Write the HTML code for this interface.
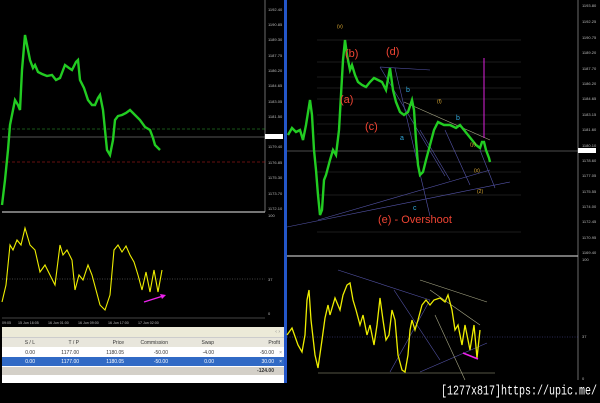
<!DOCTYPE html>
<html><head><meta charset="utf-8"><style>
html,body{margin:0;padding:0;background:#000;width:600px;height:403px;overflow:hidden;font-family:"Liberation Sans",sans-serif}
svg{position:absolute;left:0;top:0}
.ax{font-size:4px;fill:#bbb;font-family:"Liberation Sans",sans-serif}
.tb{position:absolute;left:2px;top:327px;width:282px;height:56px;background:#fff;font-size:5px;color:#333}
.tb div{position:absolute;left:0;width:282px}
.c{position:absolute;text-align:right}
.wm{position:absolute;left:441px;top:385px;font-family:"Liberation Mono",monospace;font-size:10px;line-height:12px;color:#fff;white-space:nowrap;transform:scaleY(1.35);transform-origin:0 0}
</style></head><body>
<svg width="600" height="403" viewBox="0 0 600 403">
<line x1="265" y1="0" x2="265" y2="212" stroke="#999" stroke-width="0.7"/>
<line x1="2" y1="129" x2="265" y2="129" stroke="#3a3" stroke-width="0.6" stroke-dasharray="3,2"/>
<line x1="2" y1="137" x2="265" y2="137" stroke="#aaa" stroke-width="0.6"/>
<line x1="2" y1="162" x2="265" y2="162" stroke="#c22" stroke-width="0.6" stroke-dasharray="3,2"/>
<polyline fill="none" stroke="#2c2" stroke-width="2.4" points="2,205 5,180 8,150 10,125 13,110 15,100 18,105 20,110 22,70 25,35 28,50 30,60 33,68 35,65 38,72 42,74 47,76 52,75 56,80 60,78 65,65 69,68 72,70 76,62 78,60 80,80 84,88 88,100 92,105 95,105 98,98 100,95 103,110 105,130 107,150 110,155 113,140 115,120 118,116 122,115 126,113 130,110 135,115 140,120 145,127 150,130 153,138 155,145 158,148 160,150"/>
<rect x="265" y="134" width="18" height="5" fill="#fff"/>
<g class="ax"><text x="268" y="11">1192.40</text><text x="268" y="26">1190.85</text><text x="268" y="41">1189.30</text><text x="268" y="57">1187.75</text><text x="268" y="72">1186.20</text><text x="268" y="87">1184.65</text><text x="268" y="103">1183.05</text><text x="268" y="118">1181.50</text><text x="268" y="148">1179.40</text><text x="268" y="164">1176.85</text><text x="268" y="179">1175.30</text><text x="268" y="195">1173.70</text><text x="268" y="210">1172.10</text><text x="268" y="217">100</text><text x="268" y="281">37</text><text x="268" y="315">0</text></g>
<line x1="2" y1="212" x2="265" y2="212" stroke="#bbb" stroke-width="1.3"/>
<line x1="2" y1="279" x2="265" y2="279" stroke="#888" stroke-width="0.5" stroke-dasharray="1,1.5"/>
<line x1="2" y1="318" x2="265" y2="318" stroke="#888" stroke-width="0.5"/>
<polyline fill="none" stroke="#ee0" stroke-width="1.1" points="2,302 6,285 10,245 13,250 17,240 21,245 25,228 30,245 35,250 40,272 45,265 50,275 55,285 60,245 63,255 67,250 72,260 75,290 79,275 83,280 88,265 92,275 96,290 100,305 105,310 110,295 114,250 118,245 122,252 126,246 130,255 134,262 138,275 142,290 146,272 150,292 154,270 158,292 162,270"/>
<line x1="144" y1="302" x2="163" y2="296" stroke="#e2e" stroke-width="1.3"/>
<polygon points="166,295 160,294 162,299" fill="#e2e"/>
<g class="ax" style="font-size:3.6px"><text x="2" y="324">09:05</text><text x="18" y="324">15 Jun 16:05</text><text x="48" y="324">16 Jun 01:00</text><text x="78" y="324">16 Jun 09:00</text><text x="108" y="324">16 Jun 17:00</text><text x="138" y="324">17 Jun 02:00</text></g>
<rect x="284" y="0" width="3" height="383" fill="#2456c8"/>
<line x1="578" y1="0" x2="578" y2="380" stroke="#999" stroke-width="0.7"/>
<g stroke="#3a3a3a" stroke-width="0.6">
<line x1="317" y1="40" x2="521" y2="40"/><line x1="317" y1="62" x2="521" y2="62"/><line x1="317" y1="77" x2="521" y2="77"/><line x1="317" y1="88" x2="521" y2="88"/><line x1="317" y1="99" x2="521" y2="99"/><line x1="317" y1="115" x2="521" y2="115"/><line x1="317" y1="124" x2="521" y2="124"/><line x1="317" y1="134" x2="521" y2="134"/><line x1="317" y1="162" x2="521" y2="162"/><line x1="317" y1="172" x2="521" y2="172"/><line x1="317" y1="195" x2="521" y2="195"/><line x1="317" y1="232" x2="521" y2="232"/></g>
<line x1="287" y1="151" x2="578" y2="151" stroke="#999" stroke-width="0.6"/>
<g stroke="#55a" stroke-width="0.6" fill="none">
<line x1="287" y1="227" x2="510" y2="182"/><line x1="318" y1="220" x2="490" y2="170"/>
<line x1="395" y1="68" x2="430" y2="216"/><line x1="380" y1="67" x2="445" y2="176"/>
<line x1="380" y1="67" x2="430" y2="70"/><line x1="420" y1="130" x2="450" y2="180"/><line x1="445" y1="130" x2="470" y2="185"/><line x1="480" y1="150" x2="495" y2="188"/></g>
<line x1="404" y1="102" x2="490" y2="140" stroke="#aa8" stroke-width="0.6"/>
<line x1="484" y1="58" x2="484" y2="138" stroke="#d2d" stroke-width="1"/>
<polyline fill="none" stroke="#2c2" stroke-width="2.4" points="288,135 292,128 296,132 300,130 303,140 306,125 310,100 312,115 314,150 316,170 318,195 320,215 322,210 324,180 326,175 330,160 333,150 336,155 339,130 341,95 343,60 345,40 347,55 350,70 352,65 355,75 358,82 362,85 366,87 370,82 374,78 378,80 382,82 386,90 390,68 393,90 396,102 400,112 404,115 408,112 412,100 414,110 416,140 418,165 420,175 423,172 426,160 430,145 434,130 438,122 444,125 450,125 456,128 460,125 464,130 468,135 472,140 476,145 480,148 482,142 484,142 486,150 489,158 490,162"/>
<rect x="578" y="148" width="18" height="5" fill="#fff"/>
<g class="ax"><text x="582" y="7">1193.80</text><text x="582" y="23">1192.25</text><text x="582" y="39">1190.75</text><text x="582" y="54">1189.20</text><text x="582" y="70">1187.70</text><text x="582" y="85">1186.20</text><text x="582" y="100">1184.65</text><text x="582" y="116">1183.15</text><text x="582" y="131">1181.60</text><text x="582" y="147">1180.10</text><text x="582" y="162">1178.60</text><text x="582" y="177">1177.05</text><text x="582" y="193">1175.55</text><text x="582" y="208">1174.00</text><text x="582" y="223">1172.45</text><text x="582" y="239">1170.95</text><text x="582" y="254">1169.40</text><text x="582" y="261">100</text><text x="582" y="338">37</text><text x="582" y="380">0</text></g>
<g font-family="Liberation Sans,sans-serif" fill="#e43" font-size="11"><text x="345" y="57">(b)</text><text x="386" y="55">(d)</text><text x="340" y="103">(a)</text><text x="365" y="130">(c)</text><text x="378" y="223">(e) - Overshoot</text></g>
<g font-family="Liberation Sans,sans-serif" fill="#3ad" font-size="7"><text x="406" y="92">b</text><text x="400" y="140">a</text><text x="413" y="210">c</text><text x="456" y="120">b</text></g>
<g font-family="Liberation Sans,sans-serif" fill="#da3" font-size="5"><text x="437" y="103">(f)</text><text x="474" y="172">(x)</text><text x="477" y="193">(2)</text><text x="470" y="146">(y)</text><text x="337" y="28">(v)</text></g>
<line x1="287" y1="256" x2="578" y2="256" stroke="#bbb" stroke-width="1.3"/>
<line x1="287" y1="337" x2="578" y2="337" stroke="#55a" stroke-width="0.5" stroke-dasharray="1,1.5"/>
<g stroke-width="0.6" fill="none"><line x1="338" y1="270" x2="430" y2="300" stroke="#55a"/><line x1="394" y1="290" x2="440" y2="360" stroke="#55a"/><line x1="390" y1="372" x2="430" y2="300" stroke="#55a"/><line x1="420" y1="372" x2="487" y2="343" stroke="#55a"/><line x1="420" y1="280" x2="487" y2="302" stroke="#aa8"/><line x1="430" y1="290" x2="480" y2="325" stroke="#aa8"/><line x1="435" y1="315" x2="465" y2="380" stroke="#aa8"/><line x1="318" y1="373" x2="495" y2="373" stroke="#aa8"/></g>
<polyline fill="none" stroke="#ee0" stroke-width="1.3" points="287,335 292,328 298,345 302,352 305,335 307,300 309,290 311,320 315,355 318,368 322,340 325,318 328,305 330,315 335,298 340,310 343,295 347,285 350,283 353,300 356,310 360,325 363,315 367,335 370,325 374,345 377,325 380,298 383,320 386,340 389,335 392,310 395,320 398,355 402,370 405,372 408,355 410,330 412,320 415,330 418,320 422,305 426,300 430,305 434,300 440,298 445,302 448,295 452,310 455,330 458,325 462,345 465,325 470,350 474,325 477,358 480,330"/>
<line x1="463" y1="353" x2="478" y2="359" stroke="#e2e" stroke-width="1.5"/>
</svg>
<div class="tb">
<div style="top:0;height:10px;background:#ecead8"><span style="position:absolute;right:4px;top:2px;font-size:5px;color:#888">‹ ›</span></div>
<div style="top:10px;height:10px;background:#e8e6dc;border-top:1px solid #ccc;box-sizing:border-box"><span class="c" style="left:0;width:33px;top:2px">S / L</span><span class="c" style="left:0;width:77px;top:2px">T / P</span><span class="c" style="left:0;width:122px;top:2px">Price</span><span class="c" style="left:0;width:166px;top:2px">Commission</span><span class="c" style="left:0;width:212px;top:2px">Swap</span><span class="c" style="left:0;width:278px;top:2px">Profit</span></div>
<div style="top:21px;height:9px;background:#fff"><span class="c" style="left:0;width:33px;top:2px">0.00</span><span class="c" style="left:0;width:77px;top:2px">1177.00</span><span class="c" style="left:0;width:122px;top:2px">1180.05</span><span class="c" style="left:0;width:166px;top:2px">-50.00</span><span class="c" style="left:0;width:212px;top:2px">-4.00</span><span class="c" style="left:0;width:272px;top:2px">-50.00</span><span class="c" style="left:0;width:280px;top:2px;color:#888">×</span></div>
<div style="top:30px;height:9px;background:#316ac5;color:#fff"><span class="c" style="left:0;width:33px;top:2px">0.00</span><span class="c" style="left:0;width:77px;top:2px">1177.00</span><span class="c" style="left:0;width:122px;top:2px">1180.05</span><span class="c" style="left:0;width:166px;top:2px">-50.00</span><span class="c" style="left:0;width:212px;top:2px">0.00</span><span class="c" style="left:0;width:272px;top:2px">30.00</span><span class="c" style="left:0;width:280px;top:2px">×</span></div>
<div style="top:40px;height:8px;background:#d4d0c8;font-weight:bold"><span class="c" style="left:0;width:272px;top:1px">-124.00</span></div>
</div>
<div class="wm">[1277x817]https://upic.me/</div>
</body></html>
